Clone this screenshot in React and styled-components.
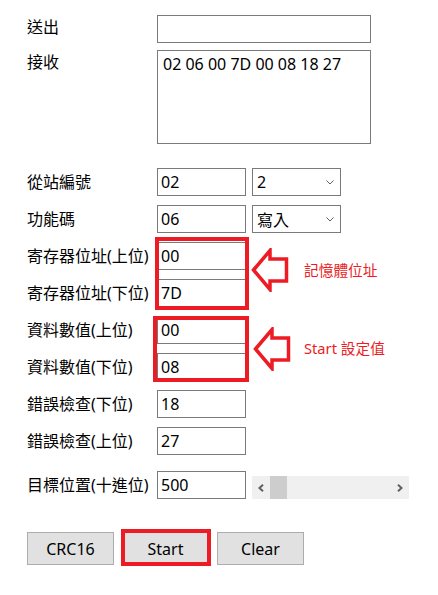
import React from "react";
import styled, { createGlobalStyle } from "styled-components";

const GlobalStyle = createGlobalStyle`
  html, body { margin: 0; padding: 0; background: #ffffff; }
  body {
    font-family: "Noto Sans", "Noto Sans CJK TC", sans-serif;
    color: #000;
  }
  * { box-sizing: border-box; }
`;

const RED = "#ed1c24";
const FONT = `"Noto Sans", "Noto Sans CJK TC", sans-serif`;

const Page = styled.div`
  width: 438px;
  height: 595px;
  padding: 15px 0 0 27px;
  display: flex;
  flex-direction: column;
`;

const TopRow = styled.div`
  display: flex;
  align-items: flex-start;
  margin-top: ${(p) => p.$mt || 0}px;
`;

const Label = styled.div`
  width: 130px;
  flex: none;
  font-size: 16px;
  line-height: 22px;
  white-space: nowrap;
  padding-top: ${(p) => (p.$top ? 1 : 0)}px;
`;

const TextBox = styled.input`
  width: ${(p) => p.$w || 89}px;
  height: 28px;
  flex: none;
  border: 1px solid #7a7a7a;
  background: #fff;
  font-family: ${FONT};
  font-size: 16px;
  color: #000;
  padding: 0 3px;
  margin: 0;
  outline: none;
  border-radius: 0;
`;

const TextArea = styled.textarea`
  width: 214px;
  height: 94px;
  border: 1px solid #7a7a7a;
  background: #fff;
  font-family: ${FONT};
  font-size: 16px;
  line-height: 22px;
  color: #000;
  padding: 2px 5px;
  margin: 0;
  resize: none;
  outline: none;
  overflow: hidden;
`;

const Form = styled.div`
  margin-top: 24px;
  display: flex;
  flex-direction: column;
  gap: 9px;
`;

const Row = styled.div`
  display: flex;
  align-items: center;
  height: 28px;
  margin-top: ${(p) => p.$mt || 0}px;
`;

const Combo = styled.div`
  width: 89px;
  height: 28px;
  margin-left: 6px;
  border: 1px solid #7a7a7a;
  background: #fff;
  display: flex;
  align-items: center;
  justify-content: space-between;
  padding: 0 6px 0 4px;
  font-size: 16px;
`;

const Group = styled.div`
  position: relative;
  display: flex;
  flex-direction: column;
  gap: 9px;
`;

const RedBox = styled.div`
  position: absolute;
  left: ${(p) => p.$l}px;
  top: ${(p) => p.$t}px;
  width: ${(p) => p.$w}px;
  height: ${(p) => p.$h}px;
  border: 4px solid ${RED};
  pointer-events: none;
`;

const ArrowMark = styled.svg`
  position: absolute;
  left: ${(p) => p.$l}px;
  top: ${(p) => p.$t}px;
`;

const Note = styled.div`
  position: absolute;
  left: ${(p) => p.$l}px;
  top: ${(p) => p.$t}px;
  color: ${RED};
  font-size: 14.7px;
  line-height: 20px;
  white-space: nowrap;
`;

const ScrollBar = styled.div`
  align-self: flex-end;
  width: 157px;
  height: 23px;
  margin-left: 6px;
  background: #f0f0f0;
  display: flex;
  align-items: stretch;
`;

const ScrollArrow = styled.div`
  width: 18px;
  flex: none;
  display: flex;
  align-items: center;
  justify-content: center;
`;

const Thumb = styled.div`
  width: 17px;
  background: #cdcdcd;
  flex: none;
`;

const Track = styled.div`
  flex: 1;
`;

const Buttons = styled.div`
  display: flex;
  gap: 8px;
  margin-top: 33px;
`;

const Button = styled.button`
  width: 87px;
  height: 33px;
  background: #e1e1e1;
  border: 1px solid #adadad;
  font-family: ${FONT};
  font-size: 16px;
  color: #000;
  padding: 0;
  margin: 0;
  border-radius: 0;
`;

const Highlight = styled.div`
  position: relative;
  display: flex;
`;

const HighlightFrame = styled.div`
  position: absolute;
  left: -1px;
  right: -2px;
  top: -3px;
  bottom: -1px;
  border: 4px solid ${RED};
  pointer-events: none;
`;

const Chevron = () => (
  <svg width="8" height="5" viewBox="0 0 8 5">
    <path d="M0.5 0.5 L4 4 L7.5 0.5" fill="none" stroke="#606060" strokeWidth="1" />
  </svg>
);

const HollowArrow = ({ l, t }) => (
  <ArrowMark $l={l} $t={t} width="38" height="44" viewBox="0 0 38 44">
    <path
      d="M2.5 22 L19 2.5 L19 11 L35.5 11 L35.5 33 L19 33 L19 41.5 Z"
      fill="none"
      stroke={RED}
      strokeWidth="3.5"
      strokeLinejoin="miter"
    />
  </ArrowMark>
);

const Field = ({ label, value }) => (
  <Row>
    <Label>{label}</Label>
    <TextBox readOnly value={value} />
  </Row>
);

export default function App() {
  return (
    <>
      <GlobalStyle />
      <Page>
        <TopRow>
          <Label $top>送出</Label>
          <TextBox $w={214} readOnly value="" />
        </TopRow>
        <TopRow $mt={7}>
          <Label $top>接收</Label>
          <TextArea readOnly value="02 06 00 7D 00 08 18 27" />
        </TopRow>

        <Form>
          <Row>
            <Label>從站編號</Label>
            <TextBox readOnly value="02" />
            <Combo>
              <span>2</span>
              <Chevron />
            </Combo>
          </Row>
          <Row>
            <Label>功能碼</Label>
            <TextBox readOnly value="06" />
            <Combo>
              <span>寫入</span>
              <Chevron />
            </Combo>
          </Row>

          <Group>
            <Field label="寄存器位址(上位)" value="00" />
            <Field label="寄存器位址(下位)" value="7D" />
            <RedBox $l={128} $t={-5} $w={94} $h={73} />
            <HollowArrow l={224} t={6} />
            <Note $l={277} $t={18}>記憶體位址</Note>
          </Group>

          <Group>
            <Field label="資料數值(上位)" value="00" />
            <Field label="資料數值(下位)" value="08" />
            <RedBox $l={126} $t={0} $w={96} $h={66} />
            <HollowArrow l={226} t={11} />
            <Note $l={277} $t={22}>Start 設定值</Note>
          </Group>

          <Field label="錯誤檢查(下位)" value="18" />
          <Field label="錯誤檢查(上位)" value="27" />

          <Row $mt={7}>
            <Label>目標位置(十進位)</Label>
            <TextBox readOnly value="500" />
            <ScrollBar>
              <ScrollArrow>
                <svg width="6" height="8" viewBox="0 0 6 8">
                  <path d="M5 0.8 L1.5 4 L5 7.2" fill="none" stroke="#606060" strokeWidth="2" />
                </svg>
              </ScrollArrow>
              <Thumb />
              <Track />
              <ScrollArrow>
                <svg width="6" height="8" viewBox="0 0 6 8">
                  <path d="M1 0.8 L4.5 4 L1 7.2" fill="none" stroke="#606060" strokeWidth="2" />
                </svg>
              </ScrollArrow>
            </ScrollBar>
          </Row>
        </Form>

        <Buttons>
          <Button>CRC16</Button>
          <Highlight>
            <Button>Start</Button>
            <HighlightFrame />
          </Highlight>
          <Button>Clear</Button>
        </Buttons>
      </Page>
    </>
  );
}
